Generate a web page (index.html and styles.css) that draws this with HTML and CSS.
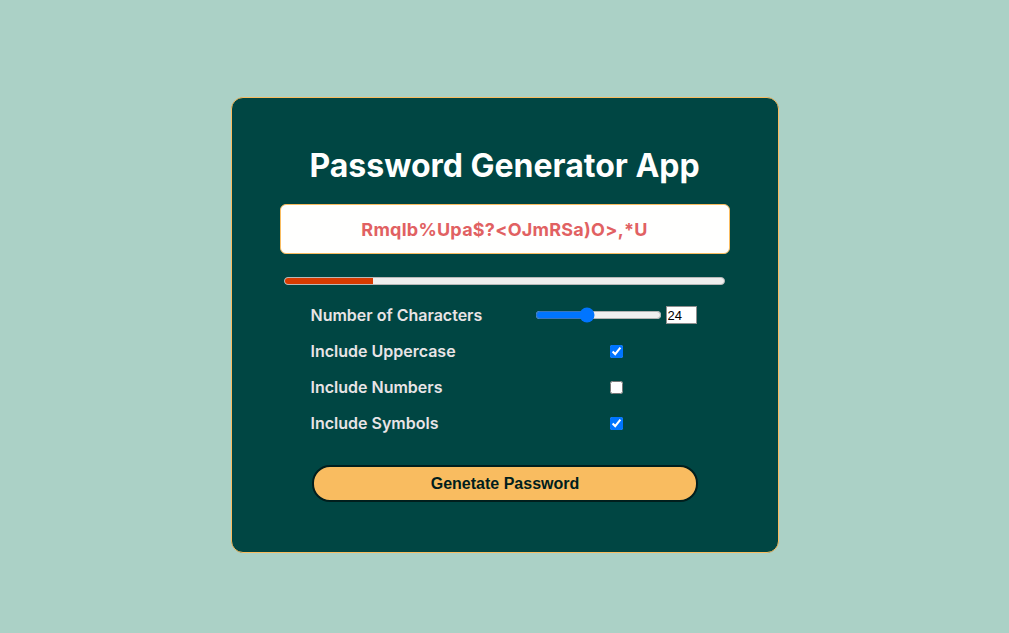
FILE: index.html
```html
<!DOCTYPE html>
<html lang="en">
<head>
<meta charset="utf-8">
<title>Password Generator App</title>
<link rel="stylesheet" href="styles.css">
</head>
<body>
<main class="card">
  <h1 class="title">Password Generator App</h1>
  <div class="output">Rmqlb%Upa$?&lt;OJmRSa)O&gt;,*U</div>
  <div class="strength"><div class="strength-fill" style="width: 20%"></div></div>
  <div class="options">
    <label class="label" for="len">Number of Characters</label>
    <div class="control control-range">
      <input class="range" type="range" id="len" min="8" max="48" value="24">
      <input class="num" type="number" value="24">
    </div>
    <label class="label" for="up">Include Uppercase</label>
    <div class="control"><input class="check" type="checkbox" id="up" checked></div>
    <label class="label" for="numbers">Include Numbers</label>
    <div class="control"><input class="check" type="checkbox" id="numbers"></div>
    <label class="label" for="sym">Include Symbols</label>
    <div class="control"><input class="check" type="checkbox" id="sym" checked></div>
  </div>
  <button class="btn" type="button">Genetate Password</button>
</main>
</body>
</html>
```
FILE: styles.css
```css
* { box-sizing: border-box; }
html, body { margin: 0; height: 100%; }
body {
  background: #abd1c6;
  font-family: Inter, "Noto Sans", sans-serif;
  display: flex;
  justify-content: center;
  padding-top: 97px;
}
.card {
  width: 548px;
  height: 456px;
  background: #004643;
  border: 1px solid #f9bc60;
  border-radius: 12px;
  display: flex;
  flex-direction: column;
  align-items: center;
  padding-top: 49px;
}
.title {
  margin: 0;
  color: #fffffe;
  font-size: 32px;
  font-weight: 700;
  line-height: 38px;
}
.output {
  margin-top: 19px;
  width: 450px;
  height: 50px;
  background: #fffffe;
  border: 1px solid #f9bc60;
  border-radius: 6px;
  color: #e16162;
  font-size: 18px;
  font-weight: 700;
  letter-spacing: 0.25px;
  display: flex;
  align-items: center;
  justify-content: center;
}
.strength {
  margin-top: 23px;
  width: 441px;
  height: 8px;
  background: #eeeeee;
  border: 1px solid #b8b8b8;
  border-radius: 4px;
  overflow: hidden;
}
.strength-fill {
  height: 100%;
  background: #d83b01;
}
.options {
  margin-top: 18px;
  margin-right: 2px;
  width: 386px;
  display: grid;
  grid-template-columns: 224px 162px;
  grid-auto-rows: 24px;
  row-gap: 12px;
}
.label {
  color: #e8e4e6;
  font-size: 16px;
  font-weight: 600;
  display: flex;
  align-items: center;
}
.control {
  display: flex;
  align-items: center;
  justify-content: center;
  padding-left: 2px;
}
.control-range { justify-content: flex-start; padding-left: 0; }
.range {
  width: 127px;
  margin: 0 4px 0 0;
  accent-color: #0075ff;
}
.num {
  width: 31px;
  height: 18px;
  margin: 0;
  padding: 0 1px;
  font-family: Arial, "Liberation Sans", sans-serif;
  font-size: 13px;
  border: 1px solid #8f8f8f;
  border-radius: 0;
  -moz-appearance: textfield;
}
.num::-webkit-inner-spin-button,
.num::-webkit-outer-spin-button { -webkit-appearance: none; margin: 0; }
.check { margin: 0; width: 13px; height: 13px; }
.btn {
  margin-top: 30px;
  width: 386px;
  height: 37px;
  background: #f9bc60;
  border: 2px solid #001e1d;
  border-radius: 18px;
  color: #001e1d;
  font-family: "Liberation Sans", Arial, sans-serif;
  font-size: 16px;
  font-weight: 700;
  margin-left: 1px;
}
```
